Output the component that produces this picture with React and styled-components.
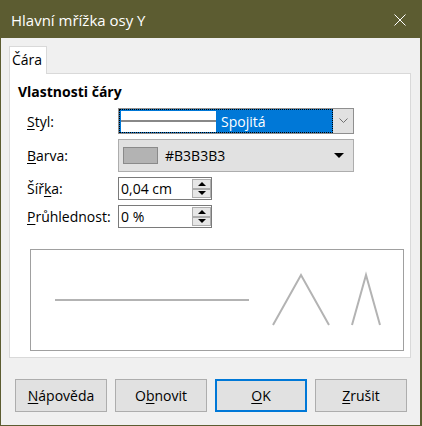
import React from "react";
import styled, { createGlobalStyle } from "styled-components";

const GlobalStyle = createGlobalStyle`
  html, body {
    margin: 0;
    padding: 0;
    background: #f0f0f0;
  }
  body {
    font-family: "Open Sans", "Noto Sans", sans-serif;
  }
`;

const Window = styled.div`
  box-sizing: border-box;
  width: 422px;
  height: 426px;
  border: 1px solid #5c5c31;
  border-right-width: 2px;
  background: #f0f0f0;
  display: flex;
  flex-direction: column;
  font-family: "Open Sans", "Noto Sans", sans-serif;
  font-size: 14px;
  color: #000;
`;

const TitleBar = styled.div`
  flex: none;
  height: 37px;
  background: #5c5c31;
  color: #fff;
  display: flex;
  align-items: center;
  justify-content: space-between;
  padding: 0 14px 0 10px;
  font-size: 15px;
`;

const CloseButton = styled.svg`
  width: 12px;
  height: 12px;
`;

const Body = styled.div`
  flex: 1;
  display: flex;
  flex-direction: column;
  padding: 8px 9px 0 8px;
`;

const TabStrip = styled.div`
  display: flex;
  height: 27px;
`;

const Tab = styled.div`
  box-sizing: border-box;
  width: 38px;
  height: 28px;
  padding: 2px 0 0 2px;
  border: 1px solid #d9d9d9;
  border-bottom: none;
  background: #fff;
  line-height: 22px;
  position: relative;
  z-index: 1;
`;

const Panel = styled.div`
  box-sizing: border-box;
  height: 285px;
  border: 1px solid #d9d9d9;
  background: #fff;
  padding: 8px 6px 0 8px;
  display: flex;
  flex-direction: column;
`;

const Heading = styled.h2`
  margin: 0;
  font-size: 14px;
  font-weight: 700;
  line-height: 19px;
`;

const Form = styled.div`
  display: grid;
  grid-template-columns: 91px auto;
  grid-template-rows: 26px 33px 23px 23px;
  row-gap: 5px;
  margin: 7px 0 0 9px;
  align-items: center;
  justify-items: start;
`;

const Label = styled.span`
  line-height: 19px;
`;

const Key = styled.span`
  text-decoration: underline;
  text-underline-offset: 2px;
`;

const Combo = styled.div`
  box-sizing: border-box;
  width: 236px;
  height: 26px;
  border: 1px solid #8f8f8f;
  display: flex;
`;

const ComboValue = styled.div`
  flex: 1;
  box-sizing: border-box;
  border: 1px dotted #000;
  background: #0078d7;
  display: flex;
  align-items: center;
  padding-left: 1px;
  color: #fff;
`;

const LineSample = styled.div`
  width: 95px;
  height: 21px;
  background: #fff;
  display: flex;
  align-items: center;
  &::after {
    content: "";
    flex: 1;
    height: 2px;
    background: #888;
  }
`;

const ComboText = styled.span`
  margin-left: 5px;
`;

const ComboArrow = styled.div`
  width: 20px;
  background: #e1e1e1;
  display: flex;
  align-items: center;
  justify-content: center;
`;

const ColorButton = styled.div`
  box-sizing: border-box;
  width: 236px;
  height: 33px;
  border: 1px solid #adadad;
  background: #e1e1e1;
  display: flex;
  align-items: center;
  padding: 0 9px 0 4px;
`;

const Swatch = styled.div`
  box-sizing: border-box;
  width: 35px;
  height: 17px;
  border: 1px solid #8a8a8a;
  background: ${({ color }) => color};
`;

const ColorName = styled.span`
  margin-left: 7px;
  flex: 1;
`;

const DownTriangle = styled.div`
  width: 0;
  height: 0;
  border-left: 5px solid transparent;
  border-right: 5px solid transparent;
  border-top: 5px solid #000;
`;

const SpinField = styled.div`
  box-sizing: border-box;
  width: 94px;
  height: 23px;
  border: 1px solid #7a7a7a;
  background: #fff;
  display: flex;
`;

const SpinValue = styled.span`
  flex: 1;
  padding-left: 2px;
  line-height: 21px;
`;

const SpinButtons = styled.div`
  width: 19px;
  display: flex;
  flex-direction: column;
  padding: 1px 0;
`;

const SpinButton = styled.div`
  flex: 1;
  box-sizing: border-box;
  border: 1px solid #adadad;
  background: #e6e6e6;
  display: flex;
  align-items: center;
  justify-content: center;
  &::after {
    content: "";
    border-left: 4px solid transparent;
    border-right: 4px solid transparent;
    ${({ up }) =>
      up ? "border-bottom: 4px solid #000;" : "border-top: 4px solid #000;"}
  }
`;

const Preview = styled.div`
  box-sizing: border-box;
  width: 374px;
  height: 102px;
  margin: 21px 0 0 12px;
  border: 1px solid #a0a0a0;
  background: #fff;
`;

const PreviewDrawing = styled.svg`
  display: block;
`;

const Footer = styled.div`
  display: flex;
  gap: 8px;
  margin-top: 21px;
  padding-left: 6px;
`;

const Button = styled.button`
  box-sizing: border-box;
  width: 92px;
  height: 33px;
  font: inherit;
  color: #000;
  background: #e1e1e1;
  border: ${({ primary }) => (primary ? "2px solid #0078d7" : "1px solid #adadad")};
  padding: 0;
`;

export default function App() {
  return (
    <>
      <GlobalStyle />
      <Window>
        <TitleBar>
          <span>Hlavní mřížka osy Y</span>
          <CloseButton viewBox="0 0 12 12">
            <path d="M0.5 0.5 L11.5 11.5 M11.5 0.5 L0.5 11.5" stroke="#fff" strokeWidth="1" />
          </CloseButton>
        </TitleBar>
        <Body>
          <TabStrip>
            <Tab>Čára</Tab>
          </TabStrip>
          <Panel>
            <Heading>Vlastnosti čáry</Heading>
            <Form>
              <Label>
                <Key>S</Key>tyl:
              </Label>
              <Combo>
                <ComboValue>
                  <LineSample />
                  <ComboText>Spojitá</ComboText>
                </ComboValue>
                <ComboArrow>
                  <svg width="9" height="6" viewBox="0 0 9 6">
                    <path d="M0.5 0.5 L4.5 4.5 L8.5 0.5" fill="none" stroke="#707070" strokeWidth="1" />
                  </svg>
                </ComboArrow>
              </Combo>

              <Label>
                <Key>B</Key>arva:
              </Label>
              <ColorButton>
                <Swatch color="#b3b3b3" />
                <ColorName>#B3B3B3</ColorName>
                <DownTriangle />
              </ColorButton>

              <Label>
                Šíř<Key>k</Key>a:
              </Label>
              <SpinField>
                <SpinValue>0,04 cm</SpinValue>
                <SpinButtons>
                  <SpinButton up />
                  <SpinButton />
                </SpinButtons>
              </SpinField>

              <Label>
                <Key>P</Key>růhlednost:
              </Label>
              <SpinField>
                <SpinValue>0 %</SpinValue>
                <SpinButtons>
                  <SpinButton up />
                  <SpinButton />
                </SpinButtons>
              </SpinField>
            </Form>
            <Preview>
              <PreviewDrawing width="372" height="100" viewBox="0 0 372 100">
                <g fill="none" stroke="#b3b3b3" strokeWidth="2">
                  <line x1="24" y1="50" x2="218" y2="50" />
                  <polyline points="242,75 270,25 298,75" />
                  <polyline points="321,75 335,25 349,75" />
                </g>
              </PreviewDrawing>
            </Preview>
          </Panel>
          <Footer>
            <Button>
              <Key>N</Key>ápověda
            </Button>
            <Button>
              O<Key>b</Key>novit
            </Button>
            <Button primary>
              <Key>O</Key>K
            </Button>
            <Button>
              <Key>Z</Key>rušit
            </Button>
          </Footer>
        </Body>
      </Window>
    </>
  );
}
